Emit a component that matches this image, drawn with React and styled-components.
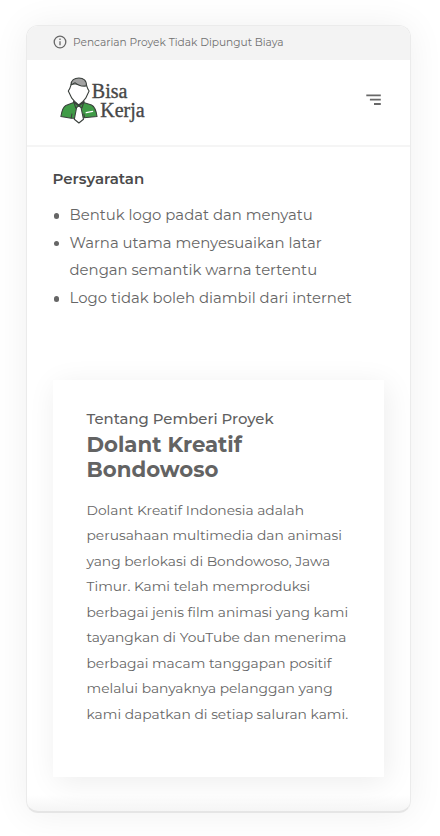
import React from "react";
import styled, { createGlobalStyle } from "styled-components";

const GlobalStyle = createGlobalStyle`
  * { box-sizing: border-box; }
  body {
    margin: 0;
    background: #fff;
    color: #666;
    font-family: Montserrat, Inter, sans-serif;
    font-weight: 400;
  }
  h2, h3, p, ul { margin: 0; padding: 0; }
`;

const Page = styled.main`
  width: 440px;
  height: 836px;
  padding: 25px 29px 23px 26px;
  overflow: hidden;
`;

const Screen = styled.section`
  display: flex;
  flex-direction: column;
  height: 788px;
  width: 385px;
  border: 1px solid #ebebeb;
  border-bottom: 2px solid #e5e5e5;
  border-radius: 12px;
  background: linear-gradient(#fff calc(100% - 16px), #f5f5f5);
  box-shadow: 0 1px 36px rgba(0, 0, 0, 0.065);
  overflow: hidden;
`;

const Banner = styled.div`
  display: flex;
  align-items: center;
  flex: none;
  gap: 6px;
  height: 34px;
  padding: 0 26px 2px;
  background: #f3f3f3;
  font-size: 10.62px;
  color: #707070;
`;

const Header = styled.header`
  display: flex;
  align-items: center;
  justify-content: space-between;
  flex: none;
  height: 87px;
  padding: 0 29px 5px 32px;
  background: #fff;
  border-bottom: 2px solid #f5f5f5;
`;

const Requirements = styled.section`
  padding: 21px 50px 0 25.5px;
`;

const SectionTitle = styled.h3`
  font-size: 15px;
  font-weight: 600;
  line-height: 22px;
  color: #4a4a4a;
`;

const List = styled.ul`
  list-style: none;
  margin-top: 12px;
  font-size: 14.88px;
  line-height: 27.7px;
`;

const Item = styled.li`
  display: flex;
  gap: 10.5px;
  &::before {
    content: "";
    flex: none;
    width: 5.5px;
    height: 5.5px;
    margin: 11px 0 0 1px;
    border-radius: 50%;
    background: #666;
  }
`;

const Card = styled.article`
  width: 331px;
  height: 397px;
  margin: 67px 0 0 26px;
  padding: 28px 33.5px;
  background: #fff;
  box-shadow: 3px 5px 28px rgba(0, 0, 0, 0.075);
`;

const Eyebrow = styled.p`
  font-size: 14.88px;
  font-weight: 500;
  line-height: 22px;
  color: #606060;
`;

const CompanyName = styled.h2`
  width: 200px;
  margin-top: 2px;
  font-size: 21.25px;
  font-weight: 700;
  line-height: 25px;
  color: #636363;
`;

const About = styled.p`
  width: 268px;
  margin-top: 16px;
  font-size: 13.81px;
  line-height: 25.5px;
`;

const Glyph = styled.svg`
  display: block;
  flex: none;
  overflow: visible;
`;

const LogoWord = styled.text`
  font-family: "Liberation Serif", serif;
  font-size: 20px;
  fill: #474747;
  stroke: #474747;
  stroke-width: 0.35px;
`;

function InfoIcon() {
  return (
    <Glyph width="14" height="14" viewBox="0 0 14 14" fill="none" stroke="#686868" strokeWidth="1.3">
      <circle cx="7" cy="7" r="5.8" />
      <path d="M7 6.3v4M7 3.6v1.4" />
    </Glyph>
  );
}

function MenuIcon() {
  return (
    <Glyph width="15" height="12" viewBox="0 0 15 12" stroke="#686868" strokeWidth="1.8">
      <path d="M0.3 1.4h14.5M3.9 5.7h10.9M8 10h6.8" />
    </Glyph>
  );
}

function Logo() {
  return (
    <Glyph width="88" height="50" viewBox="0 0 88 50" role="img" aria-label="Bisa Kerja">
      <g stroke="#3b413d" strokeWidth="1.1" strokeLinejoin="round">
        <path
          fill="#409b47"
          d="M16 27L6.8 30.4C3.8 32 2.6 37.2 1.9 41.5L12.2 43.3L19.2 43.3L25 42.8L38 41.5C37.4 37 36 31.8 32.5 30L23 27Z"
        />
        <path fill="none" d="M12.2 43.2l.8-4.6M25.6 42.6l-.8-4" />
        <path fill="#fff" d="M14.6 26.3L19.8 31L25 26.3L22 32.5L24.5 44.3L19.9 48L15.3 44.3L17.6 32.5Z" />
        <path fill="#fff" d="M12.2 9C11.3 12 11.8 12.6 9.3 16L12.8 23.2L15.6 26.3L19.7 30L24 26.3L26.7 23.2L30.1 16C27.7 12.6 28.2 12 27.2 9Z" />
        <path fill="#a2a2a2" d="M12.2 9.7C11.8 5.2 15.5 3 19.9 3S27.9 5.6 27.3 11C23 11.4 18.5 10 16.2 7.8C14.8 8.2 14.5 9 12.2 9.7Z" />
        <path fill="#409b47" d="M14.8 27L19.7 31L16.8 33ZM24.9 27L19.9 31L22.9 33Z" />
      </g>
      <path d="M27.2 37.7l6.4-1.4" stroke="#fff" strokeWidth="1.3" strokeLinecap="round" />
      <LogoWord x="32.8" y="23.4">Bisa</LogoWord>
      <LogoWord x="41.2" y="41.6">Kerja</LogoWord>
    </Glyph>
  );
}

const requirements = [
  "Bentuk logo padat dan menyatu",
  "Warna utama menyesuaikan latar dengan semantik warna tertentu",
  "Logo tidak boleh diambil dari internet",
];

export default function App() {
  return (
    <Page>
      <GlobalStyle />
      <Screen>
        <Banner>
          <InfoIcon />
          Pencarian Proyek Tidak Dipungut Biaya
        </Banner>
        <Header>
          <Logo />
          <MenuIcon />
        </Header>
        <Requirements>
          <SectionTitle>Persyaratan</SectionTitle>
          <List>
            {requirements.map((text) => (
              <Item key={text}>{text}</Item>
            ))}
          </List>
        </Requirements>
        <Card>
          <Eyebrow>Tentang Pemberi Proyek</Eyebrow>
          <CompanyName>Dolant Kreatif Bondowoso</CompanyName>
          <About>
            Dolant Kreatif Indonesia adalah perusahaan multimedia dan animasi
            yang berlokasi di Bondowoso, Jawa Timur. Kami telah memproduksi
            berbagai jenis film animasi yang kami tayangkan di YouTube dan
            menerima berbagai macam tanggapan positif melalui banyaknya
            pelanggan yang kami dapatkan di setiap saluran kami.
          </About>
        </Card>
      </Screen>
    </Page>
  );
}
